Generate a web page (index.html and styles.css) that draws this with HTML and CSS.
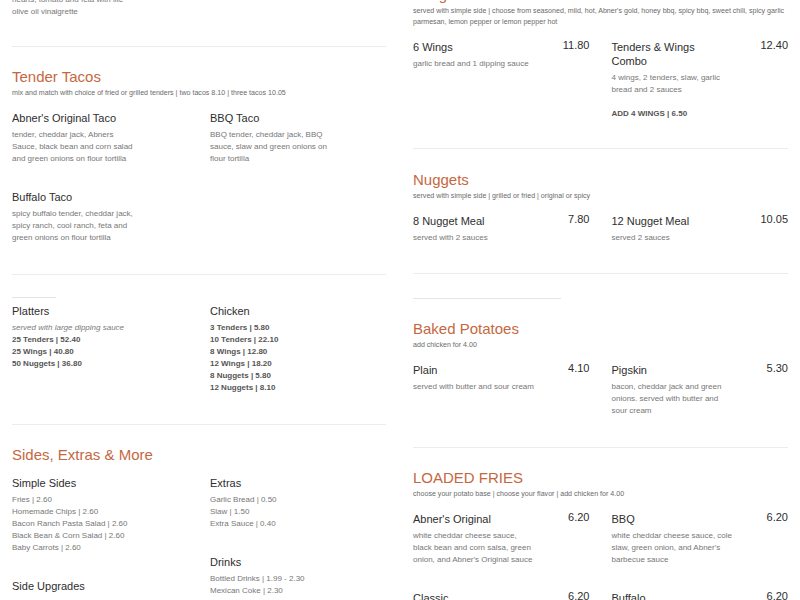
FILE: index.html
```html
<!DOCTYPE html>
<html lang="en">
<head>
<meta charset="utf-8">
<title>Menu</title>
<link rel="stylesheet" href="styles.css">
</head>
<body>
<main class="menu">
  <div class="col col--left">
    <section class="section section--lead">
      <p class="desc">fresh romaine lettuce, artichoke hearts, tomato and feta with lite olive oil vinaigrette</p>
    </section>

    <section class="section">
      <h2 class="section-title">Tender Tacos</h2>
      <p class="section-sub">mix and match with choice of fried or grilled tenders | two tacos 8.10 | three tacos 10.05</p>
      <div class="items">
        <div class="item">
          <div class="item-head"><h3 class="item-name">Abner's Original Taco</h3></div>
          <p class="desc">tender, cheddar jack, Abners Sauce, black bean and corn salad and green onions on flour tortilla</p>
        </div>
        <div class="item">
          <div class="item-head"><h3 class="item-name">BBQ Taco</h3></div>
          <p class="desc">BBQ tender, cheddar jack, BBQ sauce, slaw and green onions on flour tortilla</p>
        </div>
        <div class="item">
          <div class="item-head"><h3 class="item-name">Buffalo Taco</h3></div>
          <p class="desc">spicy buffalo tender, cheddar jack, spicy ranch, cool ranch, feta and green onions on flour tortilla</p>
        </div>
      </div>
    </section>

    <section class="section">
      <div class="ghost-heading"></div>
      <div class="items items--close">
        <div class="item">
          <h3 class="item-name">Platters</h3>
          <ul class="list list--bold">
            <li class="list-note">served with large dipping sauce</li>
            <li>25 Tenders | 52.40</li>
            <li>25 Wings | 40.80</li>
            <li>50 Nuggets | 36.80</li>
          </ul>
        </div>
        <div class="item">
          <h3 class="item-name">Chicken</h3>
          <ul class="list list--bold">
            <li>3 Tenders | 5.80</li>
            <li>10 Tenders | 22.10</li>
            <li>8 Wings | 12.80</li>
            <li>12 Wings | 18.20</li>
            <li>8 Nuggets | 5.80</li>
            <li>12 Nuggets | 8.10</li>
          </ul>
        </div>
      </div>
    </section>

    <section class="section">
      <h2 class="section-title">Sides, Extras &amp; More</h2>
      <div class="subcols">
        <div class="subcol">
          <div class="item">
            <h3 class="item-name">Simple Sides</h3>
            <ul class="list">
              <li>Fries | 2.60</li>
              <li>Homemade Chips | 2.60</li>
              <li>Bacon Ranch Pasta Salad | 2.60</li>
              <li>Black Bean &amp; Corn Salad | 2.60</li>
              <li>Baby Carrots | 2.60</li>
            </ul>
          </div>
          <div class="item">
            <h3 class="item-name">Side Upgrades</h3>
            <ul class="list">
              <li>Loaded Fries | 3.10</li>
              <li>Side Salad | 3.10</li>
            </ul>
          </div>
        </div>
        <div class="subcol">
          <div class="item">
            <h3 class="item-name">Extras</h3>
            <ul class="list">
              <li>Garlic Bread | 0.50</li>
              <li>Slaw | 1.50</li>
              <li>Extra Sauce | 0.40</li>
            </ul>
          </div>
          <div class="item">
            <h3 class="item-name">Drinks</h3>
            <ul class="list">
              <li>Bottled Drinks | 1.99 - 2.30</li>
              <li>Mexican Coke | 2.30</li>
              <li>Fountain Drinks | 1.99</li>
            </ul>
          </div>
        </div>
      </div>
    </section>
  </div>

  <div class="col col--right">
    <section class="section">
      <h2 class="section-title">Wings</h2>
      <p class="section-sub">served with simple side | choose from seasoned, mild, hot, Abner's gold, honey bbq, spicy bbq, sweet chili, spicy garlic parmesan, lemon pepper or lemon pepper hot</p>
      <div class="items">
        <div class="item">
          <div class="item-head"><h3 class="item-name">6 Wings</h3><span class="price">11.80</span></div>
          <p class="desc">garlic bread and 1 dipping sauce</p>
        </div>
        <div class="item">
          <div class="item-head"><h3 class="item-name">Tenders &amp; Wings Combo</h3><span class="price">12.40</span></div>
          <p class="desc">4 wings, 2 tenders, slaw, garlic bread and 2 sauces</p>
          <p class="addon">ADD 4 WINGS | 6.50</p>
        </div>
      </div>
    </section>

    <section class="section section--nudge">
      <h2 class="section-title">Nuggets</h2>
      <p class="section-sub">served with simple side | grilled or fried | original or spicy</p>
      <div class="items">
        <div class="item">
          <div class="item-head"><h3 class="item-name">8 Nugget Meal</h3><span class="price">7.80</span></div>
          <p class="desc">served with 2 sauces</p>
        </div>
        <div class="item">
          <div class="item-head"><h3 class="item-name">12 Nugget Meal</h3><span class="price">10.05</span></div>
          <p class="desc">served 2 sauces</p>
        </div>
      </div>
    </section>

    <div class="ghost-section"><div class="ghost-line"></div></div>

    <section class="section">
      <h2 class="section-title">Baked Potatoes</h2>
      <p class="section-sub">add chicken for 4.00</p>
      <div class="items">
        <div class="item">
          <div class="item-head"><h3 class="item-name">Plain</h3><span class="price">4.10</span></div>
          <p class="desc">served with butter and sour cream</p>
        </div>
        <div class="item">
          <div class="item-head"><h3 class="item-name">Pigskin</h3><span class="price">5.30</span></div>
          <p class="desc">bacon, cheddar jack and green onions. served with butter and sour cream</p>
        </div>
      </div>
    </section>

    <section class="section">
      <h2 class="section-title">LOADED FRIES</h2>
      <p class="section-sub">choose your potato base | choose your flavor | add chicken for 4.00</p>
      <div class="items">
        <div class="item">
          <div class="item-head"><h3 class="item-name">Abner's Original</h3><span class="price">6.20</span></div>
          <p class="desc">white cheddar cheese sauce, black bean and corn salsa, green onion, and Abner's Original sauce</p>
        </div>
        <div class="item">
          <div class="item-head"><h3 class="item-name">BBQ</h3><span class="price">6.20</span></div>
          <p class="desc">white cheddar cheese sauce, cole slaw, green onion, and Abner's barbecue sauce</p>
        </div>
        <div class="item">
          <div class="item-head"><h3 class="item-name">Classic</h3><span class="price">6.20</span></div>
          <p class="desc">white cheddar cheese sauce, bacon and green onion</p>
        </div>
        <div class="item">
          <div class="item-head"><h3 class="item-name">Buffalo</h3><span class="price">6.20</span></div>
          <p class="desc">white cheddar cheese sauce, buffalo sauce, ranch and green onion</p>
        </div>
      </div>
    </section>
  </div>
</main>
</body>
</html>
```

FILE: styles.css
```css
* {
  box-sizing: border-box;
}

html,
body {
  margin: 0;
  padding: 0;
  height: 600px;
  overflow: hidden;
  background: #ffffff;
}

body {
  font-family: "Liberation Sans", Arial, sans-serif;
  color: #333333;
}

h2,
h3,
p,
ul {
  margin: 0;
  padding: 0;
}

ul {
  list-style: none;
}

.menu {
  display: grid;
  grid-template-columns: 374px 375px;
  column-gap: 27px;
  padding: 0 12px;
  align-items: start;
}

.col {
  display: flex;
  flex-direction: column;
}

.col--left {
  margin-top: -18px;
}

.col--right {
  margin-top: -35px;
}

.section {
  padding: 20px 0 30px;
  border-bottom: 1px solid #ececec;
}

.section--lead {
  padding-top: 0;
  padding-bottom: 28px;
}

.section--nudge {
  padding-top: 21px;
  padding-bottom: 29px;
}

.section-title {
  font-size: 15px;
  line-height: 20px;
  font-weight: normal;
  color: #c5683f;
}

.section-sub {
  margin-top: 1px;
  font-size: 7.1px;
  line-height: 11px;
  color: #6a6a6a;
}

.items {
  display: grid;
  grid-template-columns: 1fr 1fr;
  column-gap: 22px;
  row-gap: 25px;
  margin-top: 12px;
}

.items--close {
  margin-top: 6px;
}

.item-head {
  display: flex;
  justify-content: space-between;
  align-items: flex-start;
}

.item-name {
  max-width: 118px;
  font-size: 11px;
  line-height: 14px;
  font-weight: normal;
  color: #2e2e2e;
}

.price {
  margin-top: -2px;
  font-size: 11px;
  line-height: 14px;
  color: #2e2e2e;
}

.desc {
  margin-top: 4px;
  max-width: 124px;
  font-size: 8px;
  line-height: 12px;
  color: #777777;
}

.section--lead .desc {
  margin-top: 0;
}

.addon {
  margin-top: 12px;
  margin-bottom: -2px;
  font-size: 8px;
  line-height: 12px;
  font-weight: bold;
  color: #555555;
}

.list {
  margin-top: 4px;
  font-size: 8px;
  line-height: 12px;
  color: #777777;
}

.list--bold {
  font-weight: bold;
  color: #555555;
}

.list--bold .list-note {
  font-weight: normal;
  font-style: italic;
  color: #7a7a7a;
}

.ghost-heading {
  width: 44px;
  height: 3px;
  border-bottom: 1px solid #e4e4e4;
}

.ghost-section {
  padding-top: 24px;
}

.ghost-line {
  width: 148px;
  height: 1px;
  background: #e6e6e6;
}

.subcols {
  display: grid;
  grid-template-columns: 1fr 1fr;
  column-gap: 22px;
  margin-top: 11px;
}

.subcol {
  display: flex;
  flex-direction: column;
  gap: 25px;
}
```
